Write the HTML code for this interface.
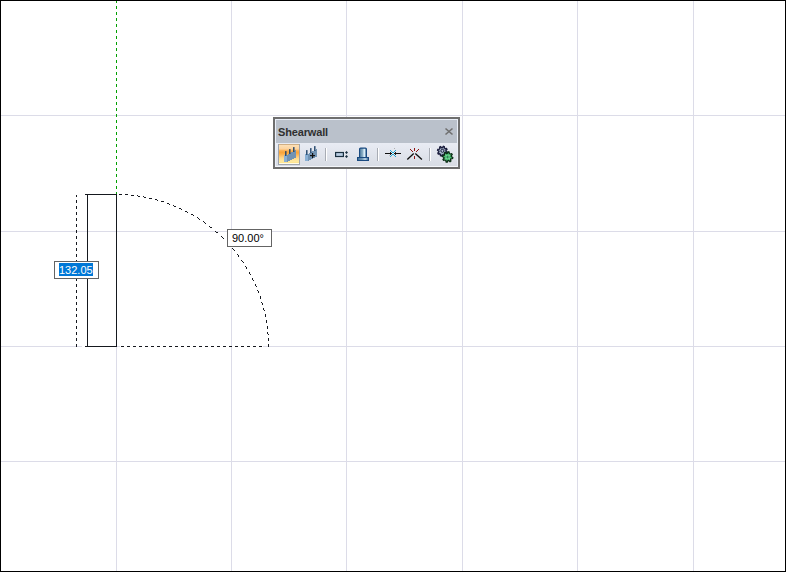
<!DOCTYPE html>
<html><head><meta charset="utf-8">
<style>
html,body{margin:0;padding:0;background:#fff;}
body{width:786px;height:572px;overflow:hidden;position:relative;font-family:"Liberation Sans",sans-serif;}
#frame{position:absolute;left:0;top:0;width:784px;height:570px;border:1px solid #000;}
svg{position:absolute;left:0;top:0;}
.lbl{position:absolute;box-sizing:border-box;width:45px;height:18px;border:1px solid #646464;background:#fff;font-size:11px;line-height:13px;}
.txt{position:absolute;font-size:11px;line-height:13px;white-space:nowrap;}
.title{position:absolute;left:278px;top:126px;font-size:11px;font-weight:bold;letter-spacing:-0.15px;color:#303030;line-height:13px;}
</style></head><body>
<svg width="786" height="572" style="shape-rendering:crispEdges">
<rect x="116" y="1" width="1" height="570" fill="#dcdce8"/><rect x="231" y="1" width="1" height="570" fill="#dcdce8"/><rect x="346" y="1" width="1" height="570" fill="#dcdce8"/><rect x="462" y="1" width="1" height="570" fill="#dcdce8"/><rect x="577" y="1" width="1" height="570" fill="#dcdce8"/><rect x="693" y="1" width="1" height="570" fill="#dcdce8"/><rect x="1" y="115" width="784" height="1" fill="#dcdce8"/><rect x="1" y="231" width="784" height="1" fill="#dcdce8"/><rect x="1" y="346" width="784" height="1" fill="#dcdce8"/><rect x="1" y="461" width="784" height="1" fill="#dcdce8"/>

<rect x="82" y="346" width="3" height="1" fill="#fff"/>
<rect x="116" y="1" width="1" height="193" fill="#fff"/>
<rect x="85" y="194" width="32" height="1" fill="#15181e"/>
<rect x="85" y="346" width="32" height="1" fill="#15181e"/>
<rect x="87" y="194" width="1" height="153" fill="#15181e"/>
<rect x="116" y="194" width="1" height="153" fill="#15181e"/>

<rect x="116" y="1" width="1" height="1" fill="#00a000"/><rect x="116" y="2" width="1" height="1" fill="#00a000"/><rect x="116" y="6" width="1" height="1" fill="#00a000"/><rect x="116" y="7" width="1" height="1" fill="#00a000"/><rect x="116" y="8" width="1" height="1" fill="#00a000"/><rect x="116" y="12" width="1" height="1" fill="#00a000"/><rect x="116" y="13" width="1" height="1" fill="#00a000"/><rect x="116" y="14" width="1" height="1" fill="#00a000"/><rect x="116" y="18" width="1" height="1" fill="#00a000"/><rect x="116" y="19" width="1" height="1" fill="#00a000"/><rect x="116" y="20" width="1" height="1" fill="#00a000"/><rect x="116" y="24" width="1" height="1" fill="#00a000"/><rect x="116" y="25" width="1" height="1" fill="#00a000"/><rect x="116" y="26" width="1" height="1" fill="#00a000"/><rect x="116" y="30" width="1" height="1" fill="#00a000"/><rect x="116" y="31" width="1" height="1" fill="#00a000"/><rect x="116" y="32" width="1" height="1" fill="#00a000"/><rect x="116" y="36" width="1" height="1" fill="#00a000"/><rect x="116" y="37" width="1" height="1" fill="#00a000"/><rect x="116" y="38" width="1" height="1" fill="#00a000"/><rect x="116" y="42" width="1" height="1" fill="#00a000"/><rect x="116" y="43" width="1" height="1" fill="#00a000"/><rect x="116" y="44" width="1" height="1" fill="#00a000"/><rect x="116" y="48" width="1" height="1" fill="#00a000"/><rect x="116" y="49" width="1" height="1" fill="#00a000"/><rect x="116" y="50" width="1" height="1" fill="#00a000"/><rect x="116" y="54" width="1" height="1" fill="#00a000"/><rect x="116" y="55" width="1" height="1" fill="#00a000"/><rect x="116" y="56" width="1" height="1" fill="#00a000"/><rect x="116" y="60" width="1" height="1" fill="#00a000"/><rect x="116" y="61" width="1" height="1" fill="#00a000"/><rect x="116" y="62" width="1" height="1" fill="#00a000"/><rect x="116" y="66" width="1" height="1" fill="#00a000"/><rect x="116" y="67" width="1" height="1" fill="#00a000"/><rect x="116" y="68" width="1" height="1" fill="#00a000"/><rect x="116" y="72" width="1" height="1" fill="#00a000"/><rect x="116" y="73" width="1" height="1" fill="#00a000"/><rect x="116" y="74" width="1" height="1" fill="#00a000"/><rect x="116" y="78" width="1" height="1" fill="#00a000"/><rect x="116" y="79" width="1" height="1" fill="#00a000"/><rect x="116" y="80" width="1" height="1" fill="#00a000"/><rect x="116" y="84" width="1" height="1" fill="#00a000"/><rect x="116" y="85" width="1" height="1" fill="#00a000"/><rect x="116" y="86" width="1" height="1" fill="#00a000"/><rect x="116" y="90" width="1" height="1" fill="#00a000"/><rect x="116" y="91" width="1" height="1" fill="#00a000"/><rect x="116" y="92" width="1" height="1" fill="#00a000"/><rect x="116" y="96" width="1" height="1" fill="#00a000"/><rect x="116" y="97" width="1" height="1" fill="#00a000"/><rect x="116" y="98" width="1" height="1" fill="#00a000"/><rect x="116" y="102" width="1" height="1" fill="#00a000"/><rect x="116" y="103" width="1" height="1" fill="#00a000"/><rect x="116" y="104" width="1" height="1" fill="#00a000"/><rect x="116" y="108" width="1" height="1" fill="#00a000"/><rect x="116" y="109" width="1" height="1" fill="#00a000"/><rect x="116" y="110" width="1" height="1" fill="#00a000"/><rect x="116" y="114" width="1" height="1" fill="#00a000"/><rect x="116" y="115" width="1" height="1" fill="#00a000"/><rect x="116" y="116" width="1" height="1" fill="#00a000"/><rect x="116" y="120" width="1" height="1" fill="#00a000"/><rect x="116" y="121" width="1" height="1" fill="#00a000"/><rect x="116" y="122" width="1" height="1" fill="#00a000"/><rect x="116" y="126" width="1" height="1" fill="#00a000"/><rect x="116" y="127" width="1" height="1" fill="#00a000"/><rect x="116" y="128" width="1" height="1" fill="#00a000"/><rect x="116" y="132" width="1" height="1" fill="#00a000"/><rect x="116" y="133" width="1" height="1" fill="#00a000"/><rect x="116" y="134" width="1" height="1" fill="#00a000"/><rect x="116" y="138" width="1" height="1" fill="#00a000"/><rect x="116" y="139" width="1" height="1" fill="#00a000"/><rect x="116" y="140" width="1" height="1" fill="#00a000"/><rect x="116" y="144" width="1" height="1" fill="#00a000"/><rect x="116" y="145" width="1" height="1" fill="#00a000"/><rect x="116" y="146" width="1" height="1" fill="#00a000"/><rect x="116" y="150" width="1" height="1" fill="#00a000"/><rect x="116" y="151" width="1" height="1" fill="#00a000"/><rect x="116" y="152" width="1" height="1" fill="#00a000"/><rect x="116" y="156" width="1" height="1" fill="#00a000"/><rect x="116" y="157" width="1" height="1" fill="#00a000"/><rect x="116" y="158" width="1" height="1" fill="#00a000"/><rect x="116" y="162" width="1" height="1" fill="#00a000"/><rect x="116" y="163" width="1" height="1" fill="#00a000"/><rect x="116" y="164" width="1" height="1" fill="#00a000"/><rect x="116" y="168" width="1" height="1" fill="#00a000"/><rect x="116" y="169" width="1" height="1" fill="#00a000"/><rect x="116" y="170" width="1" height="1" fill="#00a000"/><rect x="116" y="174" width="1" height="1" fill="#00a000"/><rect x="116" y="175" width="1" height="1" fill="#00a000"/><rect x="116" y="176" width="1" height="1" fill="#00a000"/><rect x="116" y="180" width="1" height="1" fill="#00a000"/><rect x="116" y="181" width="1" height="1" fill="#00a000"/><rect x="116" y="182" width="1" height="1" fill="#00a000"/><rect x="116" y="186" width="1" height="1" fill="#00a000"/><rect x="116" y="187" width="1" height="1" fill="#00a000"/><rect x="116" y="188" width="1" height="1" fill="#00a000"/><rect x="116" y="192" width="1" height="1" fill="#00a000"/><rect x="116" y="193" width="1" height="1" fill="#00a000"/><rect x="76" y="195" width="1" height="1" fill="#15181e"/><rect x="76" y="196" width="1" height="1" fill="#15181e"/><rect x="76" y="200" width="1" height="1" fill="#15181e"/><rect x="76" y="201" width="1" height="1" fill="#15181e"/><rect x="76" y="202" width="1" height="1" fill="#15181e"/><rect x="76" y="206" width="1" height="1" fill="#15181e"/><rect x="76" y="207" width="1" height="1" fill="#15181e"/><rect x="76" y="208" width="1" height="1" fill="#15181e"/><rect x="76" y="212" width="1" height="1" fill="#15181e"/><rect x="76" y="213" width="1" height="1" fill="#15181e"/><rect x="76" y="214" width="1" height="1" fill="#15181e"/><rect x="76" y="218" width="1" height="1" fill="#15181e"/><rect x="76" y="219" width="1" height="1" fill="#15181e"/><rect x="76" y="220" width="1" height="1" fill="#15181e"/><rect x="76" y="224" width="1" height="1" fill="#15181e"/><rect x="76" y="225" width="1" height="1" fill="#15181e"/><rect x="76" y="226" width="1" height="1" fill="#15181e"/><rect x="76" y="230" width="1" height="1" fill="#15181e"/><rect x="76" y="231" width="1" height="1" fill="#15181e"/><rect x="76" y="232" width="1" height="1" fill="#15181e"/><rect x="76" y="236" width="1" height="1" fill="#15181e"/><rect x="76" y="237" width="1" height="1" fill="#15181e"/><rect x="76" y="238" width="1" height="1" fill="#15181e"/><rect x="76" y="242" width="1" height="1" fill="#15181e"/><rect x="76" y="243" width="1" height="1" fill="#15181e"/><rect x="76" y="244" width="1" height="1" fill="#15181e"/><rect x="76" y="248" width="1" height="1" fill="#15181e"/><rect x="76" y="249" width="1" height="1" fill="#15181e"/><rect x="76" y="250" width="1" height="1" fill="#15181e"/><rect x="76" y="254" width="1" height="1" fill="#15181e"/><rect x="76" y="255" width="1" height="1" fill="#15181e"/><rect x="76" y="256" width="1" height="1" fill="#15181e"/><rect x="76" y="260" width="1" height="1" fill="#15181e"/><rect x="76" y="261" width="1" height="1" fill="#15181e"/><rect x="76" y="262" width="1" height="1" fill="#15181e"/><rect x="76" y="266" width="1" height="1" fill="#15181e"/><rect x="76" y="267" width="1" height="1" fill="#15181e"/><rect x="76" y="268" width="1" height="1" fill="#15181e"/><rect x="76" y="272" width="1" height="1" fill="#15181e"/><rect x="76" y="273" width="1" height="1" fill="#15181e"/><rect x="76" y="274" width="1" height="1" fill="#15181e"/><rect x="76" y="278" width="1" height="1" fill="#15181e"/><rect x="76" y="279" width="1" height="1" fill="#15181e"/><rect x="76" y="280" width="1" height="1" fill="#15181e"/><rect x="76" y="284" width="1" height="1" fill="#15181e"/><rect x="76" y="285" width="1" height="1" fill="#15181e"/><rect x="76" y="286" width="1" height="1" fill="#15181e"/><rect x="76" y="290" width="1" height="1" fill="#15181e"/><rect x="76" y="291" width="1" height="1" fill="#15181e"/><rect x="76" y="292" width="1" height="1" fill="#15181e"/><rect x="76" y="296" width="1" height="1" fill="#15181e"/><rect x="76" y="297" width="1" height="1" fill="#15181e"/><rect x="76" y="298" width="1" height="1" fill="#15181e"/><rect x="76" y="302" width="1" height="1" fill="#15181e"/><rect x="76" y="303" width="1" height="1" fill="#15181e"/><rect x="76" y="304" width="1" height="1" fill="#15181e"/><rect x="76" y="308" width="1" height="1" fill="#15181e"/><rect x="76" y="309" width="1" height="1" fill="#15181e"/><rect x="76" y="310" width="1" height="1" fill="#15181e"/><rect x="76" y="314" width="1" height="1" fill="#15181e"/><rect x="76" y="315" width="1" height="1" fill="#15181e"/><rect x="76" y="316" width="1" height="1" fill="#15181e"/><rect x="76" y="320" width="1" height="1" fill="#15181e"/><rect x="76" y="321" width="1" height="1" fill="#15181e"/><rect x="76" y="322" width="1" height="1" fill="#15181e"/><rect x="76" y="326" width="1" height="1" fill="#15181e"/><rect x="76" y="327" width="1" height="1" fill="#15181e"/><rect x="76" y="328" width="1" height="1" fill="#15181e"/><rect x="76" y="332" width="1" height="1" fill="#15181e"/><rect x="76" y="333" width="1" height="1" fill="#15181e"/><rect x="76" y="334" width="1" height="1" fill="#15181e"/><rect x="76" y="338" width="1" height="1" fill="#15181e"/><rect x="76" y="339" width="1" height="1" fill="#15181e"/><rect x="76" y="340" width="1" height="1" fill="#15181e"/><rect x="76" y="344" width="1" height="1" fill="#15181e"/><rect x="76" y="345" width="1" height="1" fill="#15181e"/><rect x="76" y="346" width="1" height="1" fill="#15181e"/><rect x="120" y="346" width="1" height="1" fill="#ffffff"/><rect x="121" y="346" width="1" height="1" fill="#15181e"/><rect x="122" y="346" width="1" height="1" fill="#15181e"/><rect x="123" y="346" width="1" height="1" fill="#15181e"/><rect x="124" y="346" width="1" height="1" fill="#ffffff"/><rect x="125" y="346" width="1" height="1" fill="#ffffff"/><rect x="126" y="346" width="1" height="1" fill="#ffffff"/><rect x="127" y="346" width="1" height="1" fill="#15181e"/><rect x="128" y="346" width="1" height="1" fill="#15181e"/><rect x="129" y="346" width="1" height="1" fill="#15181e"/><rect x="130" y="346" width="1" height="1" fill="#ffffff"/><rect x="131" y="346" width="1" height="1" fill="#ffffff"/><rect x="132" y="346" width="1" height="1" fill="#ffffff"/><rect x="133" y="346" width="1" height="1" fill="#15181e"/><rect x="134" y="346" width="1" height="1" fill="#15181e"/><rect x="135" y="346" width="1" height="1" fill="#15181e"/><rect x="136" y="346" width="1" height="1" fill="#ffffff"/><rect x="137" y="346" width="1" height="1" fill="#ffffff"/><rect x="138" y="346" width="1" height="1" fill="#ffffff"/><rect x="139" y="346" width="1" height="1" fill="#15181e"/><rect x="140" y="346" width="1" height="1" fill="#15181e"/><rect x="141" y="346" width="1" height="1" fill="#15181e"/><rect x="142" y="346" width="1" height="1" fill="#ffffff"/><rect x="143" y="346" width="1" height="1" fill="#ffffff"/><rect x="144" y="346" width="1" height="1" fill="#ffffff"/><rect x="145" y="346" width="1" height="1" fill="#15181e"/><rect x="146" y="346" width="1" height="1" fill="#15181e"/><rect x="147" y="346" width="1" height="1" fill="#15181e"/><rect x="148" y="346" width="1" height="1" fill="#ffffff"/><rect x="149" y="346" width="1" height="1" fill="#ffffff"/><rect x="150" y="346" width="1" height="1" fill="#ffffff"/><rect x="151" y="346" width="1" height="1" fill="#15181e"/><rect x="152" y="346" width="1" height="1" fill="#15181e"/><rect x="153" y="346" width="1" height="1" fill="#15181e"/><rect x="154" y="346" width="1" height="1" fill="#ffffff"/><rect x="155" y="346" width="1" height="1" fill="#ffffff"/><rect x="156" y="346" width="1" height="1" fill="#ffffff"/><rect x="157" y="346" width="1" height="1" fill="#15181e"/><rect x="158" y="346" width="1" height="1" fill="#15181e"/><rect x="159" y="346" width="1" height="1" fill="#15181e"/><rect x="160" y="346" width="1" height="1" fill="#ffffff"/><rect x="161" y="346" width="1" height="1" fill="#ffffff"/><rect x="162" y="346" width="1" height="1" fill="#ffffff"/><rect x="163" y="346" width="1" height="1" fill="#15181e"/><rect x="164" y="346" width="1" height="1" fill="#15181e"/><rect x="165" y="346" width="1" height="1" fill="#15181e"/><rect x="166" y="346" width="1" height="1" fill="#ffffff"/><rect x="167" y="346" width="1" height="1" fill="#ffffff"/><rect x="168" y="346" width="1" height="1" fill="#ffffff"/><rect x="169" y="346" width="1" height="1" fill="#15181e"/><rect x="170" y="346" width="1" height="1" fill="#15181e"/><rect x="171" y="346" width="1" height="1" fill="#15181e"/><rect x="172" y="346" width="1" height="1" fill="#ffffff"/><rect x="173" y="346" width="1" height="1" fill="#ffffff"/><rect x="174" y="346" width="1" height="1" fill="#ffffff"/><rect x="175" y="346" width="1" height="1" fill="#15181e"/><rect x="176" y="346" width="1" height="1" fill="#15181e"/><rect x="177" y="346" width="1" height="1" fill="#15181e"/><rect x="178" y="346" width="1" height="1" fill="#ffffff"/><rect x="179" y="346" width="1" height="1" fill="#ffffff"/><rect x="180" y="346" width="1" height="1" fill="#ffffff"/><rect x="181" y="346" width="1" height="1" fill="#15181e"/><rect x="182" y="346" width="1" height="1" fill="#15181e"/><rect x="183" y="346" width="1" height="1" fill="#15181e"/><rect x="184" y="346" width="1" height="1" fill="#ffffff"/><rect x="185" y="346" width="1" height="1" fill="#ffffff"/><rect x="186" y="346" width="1" height="1" fill="#ffffff"/><rect x="187" y="346" width="1" height="1" fill="#15181e"/><rect x="188" y="346" width="1" height="1" fill="#15181e"/><rect x="189" y="346" width="1" height="1" fill="#15181e"/><rect x="190" y="346" width="1" height="1" fill="#ffffff"/><rect x="191" y="346" width="1" height="1" fill="#ffffff"/><rect x="192" y="346" width="1" height="1" fill="#ffffff"/><rect x="193" y="346" width="1" height="1" fill="#15181e"/><rect x="194" y="346" width="1" height="1" fill="#15181e"/><rect x="195" y="346" width="1" height="1" fill="#15181e"/><rect x="196" y="346" width="1" height="1" fill="#ffffff"/><rect x="197" y="346" width="1" height="1" fill="#ffffff"/><rect x="198" y="346" width="1" height="1" fill="#ffffff"/><rect x="199" y="346" width="1" height="1" fill="#15181e"/><rect x="200" y="346" width="1" height="1" fill="#15181e"/><rect x="201" y="346" width="1" height="1" fill="#15181e"/><rect x="202" y="346" width="1" height="1" fill="#ffffff"/><rect x="203" y="346" width="1" height="1" fill="#ffffff"/><rect x="204" y="346" width="1" height="1" fill="#ffffff"/><rect x="205" y="346" width="1" height="1" fill="#15181e"/><rect x="206" y="346" width="1" height="1" fill="#15181e"/><rect x="207" y="346" width="1" height="1" fill="#15181e"/><rect x="208" y="346" width="1" height="1" fill="#ffffff"/><rect x="209" y="346" width="1" height="1" fill="#ffffff"/><rect x="210" y="346" width="1" height="1" fill="#ffffff"/><rect x="211" y="346" width="1" height="1" fill="#15181e"/><rect x="212" y="346" width="1" height="1" fill="#15181e"/><rect x="213" y="346" width="1" height="1" fill="#15181e"/><rect x="214" y="346" width="1" height="1" fill="#ffffff"/><rect x="215" y="346" width="1" height="1" fill="#ffffff"/><rect x="216" y="346" width="1" height="1" fill="#ffffff"/><rect x="217" y="346" width="1" height="1" fill="#15181e"/><rect x="218" y="346" width="1" height="1" fill="#15181e"/><rect x="219" y="346" width="1" height="1" fill="#15181e"/><rect x="220" y="346" width="1" height="1" fill="#ffffff"/><rect x="221" y="346" width="1" height="1" fill="#ffffff"/><rect x="222" y="346" width="1" height="1" fill="#ffffff"/><rect x="223" y="346" width="1" height="1" fill="#15181e"/><rect x="224" y="346" width="1" height="1" fill="#15181e"/><rect x="225" y="346" width="1" height="1" fill="#15181e"/><rect x="226" y="346" width="1" height="1" fill="#ffffff"/><rect x="227" y="346" width="1" height="1" fill="#ffffff"/><rect x="228" y="346" width="1" height="1" fill="#ffffff"/><rect x="229" y="346" width="1" height="1" fill="#15181e"/><rect x="230" y="346" width="1" height="1" fill="#15181e"/><rect x="231" y="346" width="1" height="1" fill="#15181e"/><rect x="232" y="346" width="1" height="1" fill="#ffffff"/><rect x="233" y="346" width="1" height="1" fill="#ffffff"/><rect x="234" y="346" width="1" height="1" fill="#ffffff"/><rect x="235" y="346" width="1" height="1" fill="#15181e"/><rect x="236" y="346" width="1" height="1" fill="#15181e"/><rect x="237" y="346" width="1" height="1" fill="#15181e"/><rect x="238" y="346" width="1" height="1" fill="#ffffff"/><rect x="239" y="346" width="1" height="1" fill="#ffffff"/><rect x="240" y="346" width="1" height="1" fill="#ffffff"/><rect x="241" y="346" width="1" height="1" fill="#15181e"/><rect x="242" y="346" width="1" height="1" fill="#15181e"/><rect x="243" y="346" width="1" height="1" fill="#15181e"/><rect x="244" y="346" width="1" height="1" fill="#ffffff"/><rect x="245" y="346" width="1" height="1" fill="#ffffff"/><rect x="246" y="346" width="1" height="1" fill="#ffffff"/><rect x="247" y="346" width="1" height="1" fill="#15181e"/><rect x="248" y="346" width="1" height="1" fill="#15181e"/><rect x="249" y="346" width="1" height="1" fill="#15181e"/><rect x="250" y="346" width="1" height="1" fill="#ffffff"/><rect x="251" y="346" width="1" height="1" fill="#ffffff"/><rect x="252" y="346" width="1" height="1" fill="#ffffff"/><rect x="253" y="346" width="1" height="1" fill="#15181e"/><rect x="254" y="346" width="1" height="1" fill="#15181e"/><rect x="255" y="346" width="1" height="1" fill="#15181e"/><rect x="256" y="346" width="1" height="1" fill="#ffffff"/><rect x="257" y="346" width="1" height="1" fill="#ffffff"/><rect x="258" y="346" width="1" height="1" fill="#ffffff"/><rect x="259" y="346" width="1" height="1" fill="#15181e"/><rect x="260" y="346" width="1" height="1" fill="#15181e"/><rect x="261" y="346" width="1" height="1" fill="#15181e"/><rect x="262" y="346" width="1" height="1" fill="#ffffff"/><rect x="117" y="194" width="1" height="1" fill="#ffffff"/><rect x="118" y="194" width="1" height="1" fill="#ffffff"/><rect x="119" y="194" width="1" height="1" fill="#15181e"/><rect x="120" y="194" width="1" height="1" fill="#15181e"/><rect x="121" y="194" width="1" height="1" fill="#15181e"/><rect x="122" y="194" width="1" height="1" fill="#ffffff"/><rect x="123" y="194" width="1" height="1" fill="#ffffff"/><rect x="124" y="194" width="1" height="1" fill="#ffffff"/><rect x="125" y="194" width="1" height="1" fill="#15181e"/><rect x="126" y="194" width="1" height="1" fill="#15181e"/><rect x="127" y="194" width="1" height="1" fill="#15181e"/><rect x="128" y="194" width="1" height="1" fill="#ffffff"/><rect x="129" y="195" width="1" height="1" fill="#ffffff"/><rect x="130" y="195" width="1" height="1" fill="#ffffff"/><rect x="131" y="195" width="1" height="1" fill="#15181e"/><rect x="132" y="195" width="1" height="1" fill="#15181e"/><rect x="133" y="195" width="1" height="1" fill="#15181e"/><rect x="134" y="195" width="1" height="1" fill="#ffffff"/><rect x="135" y="195" width="1" height="1" fill="#ffffff"/><rect x="136" y="195" width="1" height="1" fill="#ffffff"/><rect x="137" y="195" width="1" height="1" fill="#15181e"/><rect x="138" y="196" width="1" height="1" fill="#15181e"/><rect x="139" y="196" width="1" height="1" fill="#15181e"/><rect x="140" y="196" width="1" height="1" fill="#ffffff"/><rect x="141" y="196" width="1" height="1" fill="#ffffff"/><rect x="142" y="196" width="1" height="1" fill="#ffffff"/><rect x="143" y="196" width="1" height="1" fill="#15181e"/><rect x="144" y="197" width="1" height="1" fill="#15181e"/><rect x="145" y="197" width="1" height="1" fill="#15181e"/><rect x="146" y="197" width="1" height="1" fill="#ffffff"/><rect x="147" y="197" width="1" height="1" fill="#ffffff"/><rect x="148" y="197" width="1" height="1" fill="#ffffff"/><rect x="149" y="198" width="1" height="1" fill="#15181e"/><rect x="150" y="198" width="1" height="1" fill="#15181e"/><rect x="151" y="198" width="1" height="1" fill="#15181e"/><rect x="152" y="198" width="1" height="1" fill="#ffffff"/><rect x="153" y="199" width="1" height="1" fill="#ffffff"/><rect x="154" y="199" width="1" height="1" fill="#ffffff"/><rect x="155" y="199" width="1" height="1" fill="#15181e"/><rect x="156" y="199" width="1" height="1" fill="#15181e"/><rect x="157" y="200" width="1" height="1" fill="#15181e"/><rect x="158" y="200" width="1" height="1" fill="#ffffff"/><rect x="159" y="200" width="1" height="1" fill="#ffffff"/><rect x="160" y="201" width="1" height="1" fill="#ffffff"/><rect x="161" y="201" width="1" height="1" fill="#15181e"/><rect x="162" y="201" width="1" height="1" fill="#15181e"/><rect x="163" y="201" width="1" height="1" fill="#15181e"/><rect x="164" y="202" width="1" height="1" fill="#ffffff"/><rect x="165" y="202" width="1" height="1" fill="#ffffff"/><rect x="166" y="202" width="1" height="1" fill="#ffffff"/><rect x="167" y="203" width="1" height="1" fill="#15181e"/><rect x="168" y="203" width="1" height="1" fill="#15181e"/><rect x="169" y="204" width="1" height="1" fill="#15181e"/><rect x="170" y="204" width="1" height="1" fill="#ffffff"/><rect x="171" y="204" width="1" height="1" fill="#ffffff"/><rect x="172" y="205" width="1" height="1" fill="#ffffff"/><rect x="173" y="205" width="1" height="1" fill="#15181e"/><rect x="174" y="206" width="1" height="1" fill="#15181e"/><rect x="175" y="206" width="1" height="1" fill="#15181e"/><rect x="176" y="206" width="1" height="1" fill="#ffffff"/><rect x="177" y="207" width="1" height="1" fill="#ffffff"/><rect x="178" y="207" width="1" height="1" fill="#ffffff"/><rect x="179" y="208" width="1" height="1" fill="#15181e"/><rect x="180" y="208" width="1" height="1" fill="#15181e"/><rect x="181" y="209" width="1" height="1" fill="#15181e"/><rect x="182" y="209" width="1" height="1" fill="#ffffff"/><rect x="183" y="210" width="1" height="1" fill="#ffffff"/><rect x="184" y="210" width="1" height="1" fill="#ffffff"/><rect x="185" y="211" width="1" height="1" fill="#15181e"/><rect x="186" y="211" width="1" height="1" fill="#15181e"/><rect x="187" y="212" width="1" height="1" fill="#15181e"/><rect x="188" y="212" width="1" height="1" fill="#ffffff"/><rect x="189" y="213" width="1" height="1" fill="#ffffff"/><rect x="190" y="213" width="1" height="1" fill="#ffffff"/><rect x="191" y="214" width="1" height="1" fill="#15181e"/><rect x="192" y="214" width="1" height="1" fill="#15181e"/><rect x="193" y="215" width="1" height="1" fill="#15181e"/><rect x="194" y="216" width="1" height="1" fill="#ffffff"/><rect x="195" y="216" width="1" height="1" fill="#ffffff"/><rect x="196" y="217" width="1" height="1" fill="#ffffff"/><rect x="197" y="217" width="1" height="1" fill="#15181e"/><rect x="198" y="218" width="1" height="1" fill="#15181e"/><rect x="199" y="219" width="1" height="1" fill="#15181e"/><rect x="200" y="219" width="1" height="1" fill="#ffffff"/><rect x="201" y="220" width="1" height="1" fill="#ffffff"/><rect x="202" y="221" width="1" height="1" fill="#ffffff"/><rect x="203" y="221" width="1" height="1" fill="#15181e"/><rect x="204" y="222" width="1" height="1" fill="#15181e"/><rect x="205" y="223" width="1" height="1" fill="#15181e"/><rect x="206" y="224" width="1" height="1" fill="#ffffff"/><rect x="207" y="224" width="1" height="1" fill="#ffffff"/><rect x="208" y="225" width="1" height="1" fill="#ffffff"/><rect x="209" y="226" width="1" height="1" fill="#15181e"/><rect x="210" y="227" width="1" height="1" fill="#15181e"/><rect x="211" y="227" width="1" height="1" fill="#15181e"/><rect x="212" y="228" width="1" height="1" fill="#ffffff"/><rect x="213" y="229" width="1" height="1" fill="#ffffff"/><rect x="214" y="230" width="1" height="1" fill="#ffffff"/><rect x="215" y="231" width="1" height="1" fill="#15181e"/><rect x="216" y="232" width="1" height="1" fill="#15181e"/><rect x="217" y="232" width="1" height="1" fill="#15181e"/><rect x="218" y="233" width="1" height="1" fill="#ffffff"/><rect x="219" y="234" width="1" height="1" fill="#ffffff"/><rect x="220" y="235" width="1" height="1" fill="#ffffff"/><rect x="221" y="236" width="1" height="1" fill="#15181e"/><rect x="222" y="237" width="1" height="1" fill="#15181e"/><rect x="223" y="238" width="1" height="1" fill="#15181e"/><rect x="224" y="239" width="1" height="1" fill="#ffffff"/><rect x="225" y="240" width="1" height="1" fill="#ffffff"/><rect x="226" y="241" width="1" height="1" fill="#ffffff"/><rect x="227" y="242" width="1" height="1" fill="#15181e"/><rect x="228" y="243" width="1" height="1" fill="#15181e"/><rect x="229" y="244" width="1" height="1" fill="#15181e"/><rect x="230" y="245" width="1" height="1" fill="#ffffff"/><rect x="230" y="246" width="1" height="1" fill="#ffffff"/><rect x="231" y="247" width="1" height="1" fill="#ffffff"/><rect x="232" y="248" width="1" height="1" fill="#15181e"/><rect x="233" y="249" width="1" height="1" fill="#15181e"/><rect x="234" y="250" width="1" height="1" fill="#15181e"/><rect x="235" y="251" width="1" height="1" fill="#ffffff"/><rect x="235" y="252" width="1" height="1" fill="#ffffff"/><rect x="236" y="253" width="1" height="1" fill="#ffffff"/><rect x="237" y="254" width="1" height="1" fill="#15181e"/><rect x="238" y="255" width="1" height="1" fill="#15181e"/><rect x="238" y="256" width="1" height="1" fill="#15181e"/><rect x="239" y="257" width="1" height="1" fill="#ffffff"/><rect x="240" y="258" width="1" height="1" fill="#ffffff"/><rect x="241" y="259" width="1" height="1" fill="#ffffff"/><rect x="241" y="260" width="1" height="1" fill="#15181e"/><rect x="242" y="261" width="1" height="1" fill="#15181e"/><rect x="243" y="262" width="1" height="1" fill="#15181e"/><rect x="243" y="263" width="1" height="1" fill="#ffffff"/><rect x="244" y="264" width="1" height="1" fill="#ffffff"/><rect x="245" y="265" width="1" height="1" fill="#ffffff"/><rect x="245" y="266" width="1" height="1" fill="#15181e"/><rect x="246" y="267" width="1" height="1" fill="#15181e"/><rect x="246" y="268" width="1" height="1" fill="#15181e"/><rect x="247" y="269" width="1" height="1" fill="#ffffff"/><rect x="248" y="270" width="1" height="1" fill="#ffffff"/><rect x="248" y="271" width="1" height="1" fill="#ffffff"/><rect x="249" y="272" width="1" height="1" fill="#15181e"/><rect x="249" y="273" width="1" height="1" fill="#15181e"/><rect x="250" y="274" width="1" height="1" fill="#15181e"/><rect x="250" y="275" width="1" height="1" fill="#ffffff"/><rect x="251" y="276" width="1" height="1" fill="#ffffff"/><rect x="251" y="277" width="1" height="1" fill="#ffffff"/><rect x="252" y="278" width="1" height="1" fill="#15181e"/><rect x="252" y="279" width="1" height="1" fill="#15181e"/><rect x="253" y="280" width="1" height="1" fill="#15181e"/><rect x="253" y="281" width="1" height="1" fill="#ffffff"/><rect x="254" y="282" width="1" height="1" fill="#ffffff"/><rect x="254" y="283" width="1" height="1" fill="#ffffff"/><rect x="255" y="284" width="1" height="1" fill="#15181e"/><rect x="255" y="285" width="1" height="1" fill="#15181e"/><rect x="256" y="286" width="1" height="1" fill="#15181e"/><rect x="256" y="287" width="1" height="1" fill="#ffffff"/><rect x="256" y="288" width="1" height="1" fill="#ffffff"/><rect x="257" y="289" width="1" height="1" fill="#ffffff"/><rect x="257" y="290" width="1" height="1" fill="#15181e"/><rect x="258" y="291" width="1" height="1" fill="#15181e"/><rect x="258" y="292" width="1" height="1" fill="#15181e"/><rect x="258" y="293" width="1" height="1" fill="#ffffff"/><rect x="259" y="294" width="1" height="1" fill="#ffffff"/><rect x="259" y="295" width="1" height="1" fill="#ffffff"/><rect x="260" y="296" width="1" height="1" fill="#15181e"/><rect x="260" y="297" width="1" height="1" fill="#15181e"/><rect x="260" y="298" width="1" height="1" fill="#15181e"/><rect x="261" y="299" width="1" height="1" fill="#ffffff"/><rect x="261" y="300" width="1" height="1" fill="#ffffff"/><rect x="261" y="301" width="1" height="1" fill="#ffffff"/><rect x="261" y="302" width="1" height="1" fill="#15181e"/><rect x="262" y="303" width="1" height="1" fill="#15181e"/><rect x="262" y="304" width="1" height="1" fill="#15181e"/><rect x="262" y="305" width="1" height="1" fill="#ffffff"/><rect x="263" y="306" width="1" height="1" fill="#ffffff"/><rect x="263" y="307" width="1" height="1" fill="#ffffff"/><rect x="263" y="308" width="1" height="1" fill="#15181e"/><rect x="263" y="309" width="1" height="1" fill="#15181e"/><rect x="264" y="310" width="1" height="1" fill="#15181e"/><rect x="264" y="311" width="1" height="1" fill="#ffffff"/><rect x="264" y="312" width="1" height="1" fill="#ffffff"/><rect x="264" y="313" width="1" height="1" fill="#ffffff"/><rect x="265" y="314" width="1" height="1" fill="#15181e"/><rect x="265" y="315" width="1" height="1" fill="#15181e"/><rect x="265" y="316" width="1" height="1" fill="#15181e"/><rect x="265" y="317" width="1" height="1" fill="#ffffff"/><rect x="265" y="318" width="1" height="1" fill="#ffffff"/><rect x="266" y="319" width="1" height="1" fill="#ffffff"/><rect x="266" y="320" width="1" height="1" fill="#15181e"/><rect x="266" y="321" width="1" height="1" fill="#15181e"/><rect x="266" y="322" width="1" height="1" fill="#15181e"/><rect x="266" y="323" width="1" height="1" fill="#ffffff"/><rect x="266" y="324" width="1" height="1" fill="#ffffff"/><rect x="267" y="325" width="1" height="1" fill="#ffffff"/><rect x="267" y="326" width="1" height="1" fill="#15181e"/><rect x="267" y="327" width="1" height="1" fill="#15181e"/><rect x="267" y="328" width="1" height="1" fill="#15181e"/><rect x="267" y="329" width="1" height="1" fill="#ffffff"/><rect x="267" y="330" width="1" height="1" fill="#ffffff"/><rect x="267" y="331" width="1" height="1" fill="#ffffff"/><rect x="267" y="332" width="1" height="1" fill="#15181e"/><rect x="267" y="333" width="1" height="1" fill="#15181e"/><rect x="268" y="334" width="1" height="1" fill="#15181e"/><rect x="268" y="335" width="1" height="1" fill="#ffffff"/><rect x="268" y="336" width="1" height="1" fill="#ffffff"/><rect x="268" y="337" width="1" height="1" fill="#ffffff"/><rect x="268" y="338" width="1" height="1" fill="#15181e"/><rect x="268" y="339" width="1" height="1" fill="#15181e"/><rect x="268" y="340" width="1" height="1" fill="#15181e"/><rect x="268" y="341" width="1" height="1" fill="#ffffff"/><rect x="268" y="342" width="1" height="1" fill="#ffffff"/><rect x="268" y="343" width="1" height="1" fill="#ffffff"/><rect x="268" y="344" width="1" height="1" fill="#15181e"/><rect x="268" y="345" width="1" height="1" fill="#15181e"/><rect x="268" y="346" width="1" height="1" fill="#15181e"/>
</svg>
<div id="frame"></div>
<div class="lbl" style="left:54px;top:261px;"></div>
<div style="position:absolute;left:59px;top:263px;width:34px;height:13px;background:#0078d7;"></div>
<div class="txt" style="left:59px;top:264px;color:#fff;">132.05</div>
<div class="lbl" style="left:227px;top:229px;"></div>
<div class="txt" style="left:232px;top:232px;color:#000;">90.00°</div>
<svg width="786" height="572">
<defs>
<linearGradient id="gbtn" x1="0" y1="0" x2="0" y2="1">
<stop offset="0" stop-color="#e9ecf4"/><stop offset="1" stop-color="#d8dce4"/>
</linearGradient>
<linearGradient id="gpress" x1="0" y1="0" x2="0" y2="1">
<stop offset="0" stop-color="#fde0b6"/>
<stop offset="0.22" stop-color="#fcd3a0"/>
<stop offset="0.3" stop-color="#fab45a"/>
<stop offset="0.4" stop-color="#f8a438"/>
<stop offset="0.5" stop-color="#faae4a"/>
<stop offset="0.72" stop-color="#fdd68a"/>
<stop offset="0.9" stop-color="#feeaa0"/>
<stop offset="1" stop-color="#fee48e"/>
</linearGradient>
<linearGradient id="gcol" x1="0" y1="0" x2="1" y2="0">
<stop offset="0" stop-color="#5a86a6"/><stop offset="0.4" stop-color="#80a6be"/><stop offset="0.7" stop-color="#e4f6ff"/><stop offset="1" stop-color="#4c7aa0"/>
</linearGradient>
</defs>
<g style="shape-rendering:crispEdges">
<rect x="273" y="117" width="187" height="52" fill="#6e6e6e"/>
<rect x="275" y="119" width="183" height="48" fill="#eaeff8"/>
<rect x="276" y="120" width="181" height="23" fill="#bac1cb"/>
<rect x="276" y="143" width="181" height="23" fill="url(#gbtn)"/>
<rect x="275" y="166" width="183" height="1" fill="#f4f6fa"/>
<!-- pressed button -->
<rect x="278" y="144" width="22" height="21" rx="1.5" fill="#9ea4ac"/>
<rect x="279" y="144" width="20" height="1" fill="#cfae84"/>
<rect x="279" y="145" width="20" height="18" fill="url(#gpress)"/>
<rect x="279" y="163" width="20" height="1" fill="#fffbe8"/>
<!-- separators -->
<rect x="325" y="148" width="1" height="13" fill="#a8acb4"/><rect x="326" y="148" width="1" height="13" fill="#ffffff"/>
<rect x="377" y="148" width="1" height="13" fill="#a8acb4"/><rect x="378" y="148" width="1" height="13" fill="#ffffff"/>
<rect x="429" y="148" width="1" height="13" fill="#a8acb4"/><rect x="430" y="148" width="1" height="13" fill="#ffffff"/>
</g>
<g><polygon points="287,155 296,150 296,157.6 287,162" fill="#7193b3" style="shape-rendering:crispEdges"/><rect x="284" y="155" width="3" height="7" fill="#8ab0d4" style="shape-rendering:crispEdges"/><rect x="285.1" y="151" width="1.4" height="5" rx="0.5" fill="#1f4268"/><rect x="289.1" y="149" width="1.4" height="5" rx="0.5" fill="#1f4268"/><rect x="293.1" y="147" width="1.4" height="5" rx="0.5" fill="#1f4268"/></g><g><polygon points="308,154 317,149 317,156.6 308,161" fill="#7193b3" style="shape-rendering:crispEdges"/><rect x="305" y="154" width="3" height="7" fill="#8ab0d4" style="shape-rendering:crispEdges"/><rect x="306.1" y="150" width="1.4" height="5" rx="0.5" fill="#1f4268"/><rect x="310.1" y="148" width="1.4" height="5" rx="0.5" fill="#1f4268"/><rect x="314.1" y="146" width="1.4" height="5" rx="0.5" fill="#1f4268"/><rect x="310" y="155" width="5" height="1.2" fill="#111"/><rect x="312" y="153" width="1.2" height="5" fill="#111"/></g><rect x="335.6" y="152.5" width="7.8" height="4" fill="#b8cce2" stroke="#1a3040" stroke-width="1.2"/><path d="M346.5 151 L348 152.5 L346.5 154 L345 152.5Z M346.5 155 L348 156.5 L346.5 158 L345 156.5Z" fill="#1a3040"/><path d="M359.6 157.5 V149 Q359.6 148.1 360.6 148.1 H365.4 Q366.4 148.1 366.4 149 V157.5" fill="url(#gcol)" stroke="#1a4a80" stroke-width="1.2"/><rect x="357.6" y="157.6" width="10.8" height="2.8" fill="url(#gcol)" stroke="#1a4a80" stroke-width="1.2"/><g style="shape-rendering:crispEdges"><rect x="385" y="153" width="7" height="1" fill="#111"/><rect x="394" y="153" width="7" height="1" fill="#111"/><rect x="392" y="153" width="2" height="1" fill="#e6f2f6"/><rect x="390" y="152" width="1" height="1" fill="#222"/><rect x="390" y="154" width="1" height="1" fill="#222"/><rect x="395" y="152" width="1" height="1" fill="#222"/><rect x="395" y="154" width="1" height="1" fill="#222"/><rect x="391" y="153" width="1" height="1" fill="#111"/><rect x="394" y="153" width="1" height="1" fill="#111"/><rect x="390" y="150" width="1" height="1" fill="#1ca6d2"/><rect x="391" y="151" width="1" height="1" fill="#1ca6d2"/><rect x="392" y="152" width="1" height="1" fill="#1ca6d2"/><rect x="393" y="152" width="1" height="1" fill="#1ca6d2"/><rect x="394" y="151" width="1" height="1" fill="#1ca6d2"/><rect x="395" y="150" width="1" height="1" fill="#1ca6d2"/><rect x="392" y="154" width="1" height="1" fill="#1ca6d2"/><rect x="393" y="154" width="1" height="1" fill="#1ca6d2"/><rect x="391" y="155" width="1" height="1" fill="#1ca6d2"/><rect x="390" y="156" width="1" height="1" fill="#1ca6d2"/><rect x="394" y="155" width="1" height="1" fill="#1ca6d2"/><rect x="395" y="156" width="1" height="1" fill="#1ca6d2"/><rect x="394" y="148" width="1" height="1" fill="#b0b0b0"/><rect x="389" y="155" width="1" height="1" fill="#c0c0c0"/></g><path d="M407.3 159.6 L413.7 153.6 M415.3 153.6 L421.9 159.6" stroke="#111" stroke-width="1.35"/><g style="shape-rendering:crispEdges"><rect x="414" y="148" width="1" height="1" fill="#8e1010"/><rect x="414" y="149" width="1" height="1" fill="#8e1010"/><rect x="414" y="150" width="1" height="1" fill="#8e1010"/><rect x="414" y="156" width="1" height="1" fill="#8e1010"/><rect x="414" y="157" width="1" height="1" fill="#8e1010"/><rect x="414" y="158" width="1" height="1" fill="#8e1010"/><rect x="410" y="149" width="1" height="1" fill="#8e1010"/><rect x="411" y="150" width="1" height="1" fill="#8e1010"/><rect x="412" y="151" width="1" height="1" fill="#8e1010"/><rect x="418" y="149" width="1" height="1" fill="#8e1010"/><rect x="417" y="150" width="1" height="1" fill="#8e1010"/><rect x="416" y="151" width="1" height="1" fill="#8e1010"/></g><polygon points="447.20,152.17 446.92,153.09 445.39,153.21 444.94,153.75 445.11,155.28 444.26,155.73 443.09,154.73 442.39,154.80 441.43,156.00 440.51,155.72 440.39,154.19 439.85,153.74 438.32,153.91 437.87,153.06 438.87,151.89 438.80,151.19 437.60,150.23 437.88,149.31 439.41,149.19 439.86,148.65 439.69,147.12 440.54,146.67 441.71,147.67 442.41,147.60 443.37,146.40 444.29,146.68 444.41,148.21 444.95,148.66 446.48,148.49 446.93,149.34 445.93,150.51 446.00,151.21" fill="#a4b2c8" stroke="#1a1c3c" stroke-width="1.4"/><path d="M440.2 149.2 L444.4 153.2 M444.4 149.2 L440.2 153.2" stroke="#c8d4e4" stroke-width="0.8"/><circle cx="442.4" cy="150.8" r="1.5" fill="none" stroke="#1a1c3c" stroke-width="1"/><polygon points="452.77,157.52 452.57,158.52 450.86,158.75 450.46,159.35 450.89,161.03 450.04,161.59 448.67,160.54 447.96,160.68 447.08,162.17 446.08,161.97 445.85,160.26 445.25,159.86 443.57,160.29 443.01,159.44 444.06,158.07 443.92,157.36 442.43,156.48 442.63,155.48 444.34,155.25 444.74,154.65 444.31,152.97 445.16,152.41 446.53,153.46 447.24,153.32 448.12,151.83 449.12,152.03 449.35,153.74 449.95,154.14 451.63,153.71 452.19,154.56 451.14,155.93 451.28,156.64" fill="#4cc474" stroke="#0a2c14" stroke-width="1.3"/><path d="M445.2 154.6 L450 159.4 M450 154.6 L445.2 159.4" stroke="#9ad8b4" stroke-width="0.9"/><circle cx="447.6" cy="157" r="1.1" fill="#2e7a50"/>
<!-- close X -->
<path d="M445.5 128.5 L452.5 134.5 M452.5 128.5 L445.5 134.5" stroke="#6f6f6f" stroke-width="1.6" fill="none"/>
</svg>
<div class="title">Shearwall</div>
</body></html>
